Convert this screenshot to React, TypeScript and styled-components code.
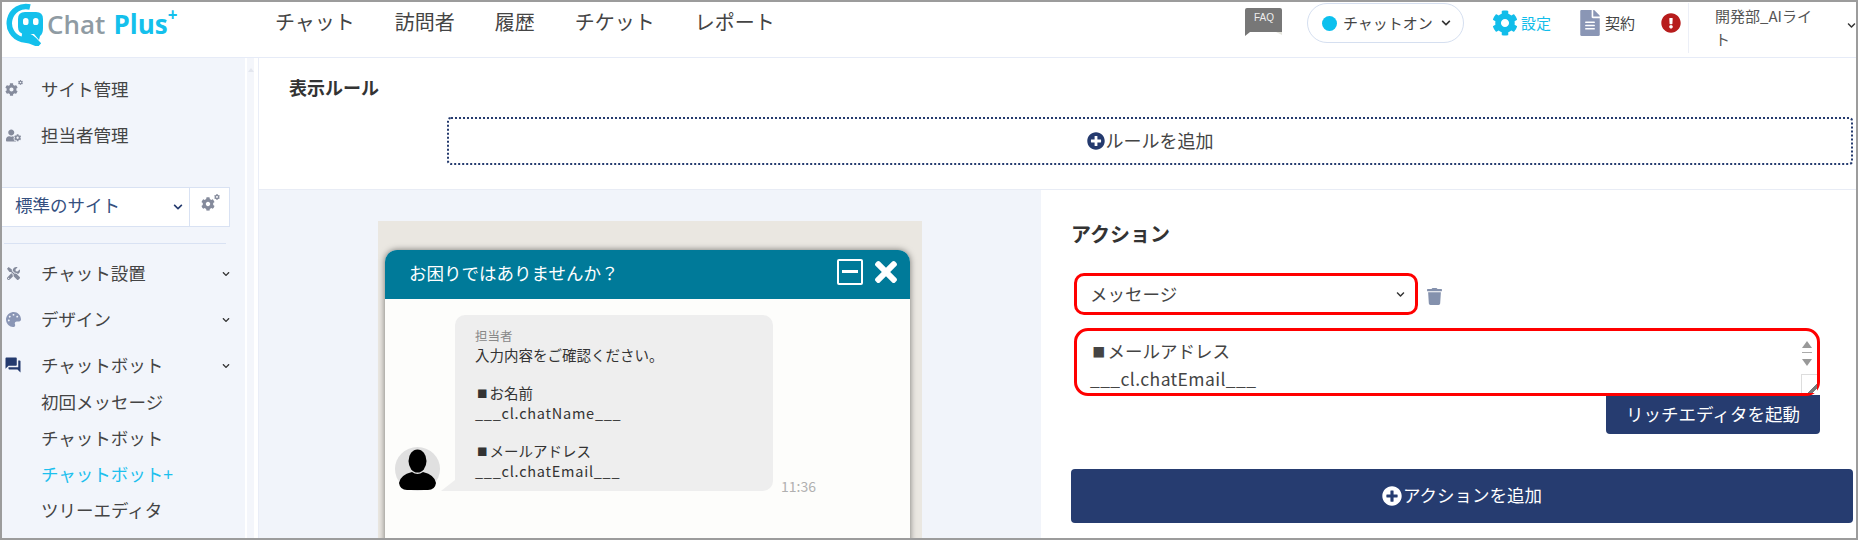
import React from 'react';
import styled, { createGlobalStyle } from 'styled-components';
import {
  FaChevronDown, FaCog, FaExclamationCircle, FaFileAlt, FaPalette,
  FaPlusCircle, FaTimes, FaTools, FaTrash, FaUserCog,
} from 'react-icons/fa';
import { MdQuestionAnswer } from 'react-icons/md';

const GlobalStyle = createGlobalStyle`
  html, body {
    margin: 0;
    padding: 0;
    background: #fff;
    overflow: hidden;
  }
  body {
    font-family: "Noto Sans CJK JP", "Noto Sans", sans-serif;
    color: #444;
  }
`;

function Logo() {
  return (
    <LogoWrap>
      <svg width="40" height="44" viewBox="0 0 40 44">
        <path d="M27 5 A16.5 16.5 0 0 0 19 37.5 Q29 38.5 36 43 Q28 33 19 32" fill="none" stroke="#14c0ec" strokeWidth="5.5" />
        <path d="M22 10 H33 Q40 10 40 17 V26 Q40 32 37 34 L36 38 L31 32 H22 Q15 32 15 25 V17 Q15 10 22 10 Z" fill="#14c0ec" />
        <rect x="20" y="16" width="5.5" height="7" rx="2.6" fill="#fff" />
        <rect x="30" y="16" width="5.5" height="7" rx="2.6" fill="#fff" />
      </svg>
      <LogoGray>Chat</LogoGray>
      <LogoCyan>Plus</LogoCyan>
      <LogoPlus>+</LogoPlus>
    </LogoWrap>
  );
}

function FaqIcon() {
  return (
    <FaqWrap>
      <svg width="38" height="28" viewBox="0 0 38 28">
        <path d="M31 24 H37 V27 Z" fill="#e4e4dc" />
        <path d="M2 0 H35 Q37 0 37 2 V24 H5 L0 28 V2 Q0 0 2 0 Z" fill="#777" />
      </svg>
      <FaqText>FAQ</FaqText>
    </FaqWrap>
  );
}

function Avatar() {
  return (
    <svg width="45" height="44" viewBox="0 0 45 44">
      <ellipse cx="22.5" cy="22" rx="22.5" ry="22" fill="#e0e0e0" />
      <ellipse cx="22.5" cy="14" rx="9" ry="11.5" fill="#000" />
      <path d="M17 25 Q22.5 29 28 25 Q40 28 41 36 Q40 43 33 43 H12 Q5 43 4 36 Q5 28 17 25 Z" fill="#000" />
    </svg>
  );
}

// big gear with a tiny one at its upper right
function GearPair({ size }: { size: number }) {
  return (
    <GearWrap>
      <FaCog size={size} />
      <TinyGear><FaCog size={Math.round(size * 0.42)} /></TinyGear>
    </GearWrap>
  );
}

const subItems = ['初回メッセージ', 'チャットボット', 'チャットボット+', 'ツリーエディタ'];

export default function App() {
  return (
    <>
      <GlobalStyle />
      <Frame>
        <TopBar>
          <LogoCell><Logo /></LogoCell>
          <MainNav>
            {['チャット', '訪問者', '履歴', 'チケット', 'レポート'].map((t) => <span key={t}>{t}</span>)}
          </MainNav>
          <TopRight>
            <FaqIcon />
            <StatusPill>
              <StatusDot />
              <StatusText>チャットオン</StatusText>
              <FaChevronDown size={10} color="#333" />
            </StatusPill>
            <IconLink $color="#12bdea" $gap={3} $left={28}>
              <FaCog size={26} />
              <LinkText>設定</LinkText>
            </IconLink>
            <IconLink $color="#444" $gap={2} $left={26}>
              <FaFileAlt size={26} color="#8a96b5" />
              <LinkText>契約</LinkText>
            </IconLink>
            <AlertMark><FaExclamationCircle size={20} /></AlertMark>
            <UserCell>
              <UserName>開発部_AIライト</UserName>
              <UserChevron><FaChevronDown size={9} color="#333" /></UserChevron>
            </UserCell>
          </TopRight>
        </TopBar>
        <Body>
          <Sidebar>
            <NavItem>
              <NavIcon $color="#858b9c"><GearPair size={13} /></NavIcon>
              <NavLabel>サイト管理</NavLabel>
            </NavItem>
            <NavItem>
              <NavIcon $color="#858b9c"><FaUserCog size={15} /></NavIcon>
              <NavLabel>担当者管理</NavLabel>
            </NavItem>
            <SiteSelect>
              <SiteName>
                <span>標準のサイト</span>
                <FaChevronDown size={10} color="#243a6e" />
              </SiteName>
              <SiteGear><GearPair size={14} /></SiteGear>
            </SiteSelect>
            <SideDivider />
            <NavItem>
              <NavIcon $color="#858b9c"><FaTools size={13} /></NavIcon>
              <NavLabel>チャット設置</NavLabel>
              <NavChevron><FaChevronDown size={8} /></NavChevron>
            </NavItem>
            <NavItem>
              <NavIcon $color="#8a96b5"><FaPalette size={15} /></NavIcon>
              <NavLabel>デザイン</NavLabel>
              <NavChevron><FaChevronDown size={8} /></NavChevron>
            </NavItem>
            <NavItem>
              <NavIcon $color="#243a6e"><MdQuestionAnswer size={18} /></NavIcon>
              <NavLabel>チャットボット</NavLabel>
              <NavChevron><FaChevronDown size={8} /></NavChevron>
            </NavItem>
            <SubList>
              {subItems.map((t) => <SubItem key={t} $active={t === 'チャットボット+'}>{t}</SubItem>)}
            </SubList>
          </Sidebar>
          <ScrollStrip><ScrollArrow /></ScrollStrip>
          <Main>
            <RuleSection>
              <SectionTitle>表示ルール</SectionTitle>
              <AddRule>
                <FaPlusCircle size={18} color="#243a6e" />
                <ButtonLabel>ルールを追加</ButtonLabel>
              </AddRule>
            </RuleSection>
            <Lower>
              <Preview>
                <PreviewStage>
                  <ChatWidget>
                    <ChatHeader>
                      <ChatTitle>お困りではありませんか？</ChatTitle>
                      <MinimizeBox />
                      <CloseMark><FaTimes size={32} /></CloseMark>
                    </ChatHeader>
                    <ChatBody>
                      <Avatar />
                      <Bubble>
                        <BubbleTail />
                        <BubbleName>担当者</BubbleName>
                        <BubbleText>
                          <BubbleLine>入力内容をご確認ください。</BubbleLine>
                          <BubbleLine />
                          <BubbleLine><Square>■</Square>お名前</BubbleLine>
                          <BubbleLine $latin>___cl.chatName___</BubbleLine>
                          <BubbleLine />
                          <BubbleLine><Square>■</Square>メールアドレス</BubbleLine>
                          <BubbleLine $latin>___cl.chatEmail___</BubbleLine>
                        </BubbleText>
                      </Bubble>
                      <ChatTime>11:36</ChatTime>
                    </ChatBody>
                  </ChatWidget>
                </PreviewStage>
              </Preview>
              <ActionPane>
                <ActionTitle>アクション</ActionTitle>
                <SelectRow>
                  <ActionSelect>
                    <span>メッセージ</span>
                    <FaChevronDown size={9} color="#333" />
                  </ActionSelect>
                  <TrashMark><FaTrash size={17} /></TrashMark>
                </SelectRow>
                <MessageBox>
                  <BoxSquare>■</BoxSquare>メールアドレス
                  <BoxLatin>___cl.chatEmail___</BoxLatin>
                  <ArrowUp />
                  <ArrowRule />
                  <ArrowDown />
                  <ResizeGrip />
                </MessageBox>
                <RichRow><RichButton>リッチエディタを起動</RichButton></RichRow>
                <AddAction>
                  <AddActionIcon><FaPlusCircle size={20} /></AddActionIcon>
                  <ButtonLabel>アクションを追加</ButtonLabel>
                </AddAction>
              </ActionPane>
            </Lower>
          </Main>
        </Body>
      </Frame>
    </>
  );
}

const Frame = styled.div`
  box-sizing: border-box;
  width: 1858px;
  height: 540px;
  border: 2px solid #9c9c9c;
  display: flex;
  flex-direction: column;
  overflow: hidden;
  background: #fff;
`;

const TopBar = styled.header`
  box-sizing: border-box;
  height: 56px;
  flex: none;
  display: flex;
  align-items: flex-start;
  border-bottom: 1px solid #e6ebf7;
`;

const LogoCell = styled.div`
  width: 273px;
  flex: none;
`;

const LogoWrap = styled.div`
  display: flex;
  align-items: center;
  height: 44px;
  padding-left: 1px;
  font-family: "Open Sans", sans-serif;
  font-size: 26px;
  font-weight: 700;
  line-height: 1;
`;

const LogoGray = styled.span`
  color: #8f9ba3;
  margin-left: 4px;
  font-weight: 600;
`;

const LogoCyan = styled.span`
  color: #14c0ec;
  margin-left: 8px;
`;

const LogoPlus = styled.span`
  color: #14c0ec;
  font-size: 17px;
  align-self: flex-start;
  margin-top: 4px;
`;

const MainNav = styled.nav`
  display: flex;
  gap: 40px;
  font-size: 20px;
  line-height: 40px;
  color: #444;
`;

const TopRight = styled.div`
  margin-left: auto;
  display: flex;
  align-items: flex-start;
  height: 100%;
`;

const FaqWrap = styled.div`
  position: relative;
  width: 38px;
  height: 28px;
  margin-top: 6px;
`;

const FaqText = styled.span`
  position: absolute;
  left: 0;
  right: 0;
  top: 3px;
  text-align: center;
  font-family: "Liberation Sans", sans-serif;
  font-size: 10px;
  line-height: 14px;
  color: #eee;
`;

const StatusPill = styled.div`
  box-sizing: border-box;
  width: 157px;
  height: 40px;
  margin: 1px 0 0 24px;
  padding: 0 12px 0 14px;
  display: flex;
  align-items: center;
  border: 1px solid #d5dff0;
  border-radius: 20px;
  font-size: 15px;
  color: #444;

  svg {
    margin-left: auto;
  }
`;

const StatusText = styled.span`
  margin-bottom: 2px;
`;

const StatusDot = styled.span`
  width: 15px;
  height: 15px;
  margin-right: 6px;
  border-radius: 50%;
  background: #0cc0ee;
`;

const IconLink = styled.div<{ $color: string; $gap: number; $left: number }>`
  display: flex;
  align-items: center;
  gap: ${(p) => p.$gap}px;
  height: 40px;
  margin: 1px 0 0 ${(p) => p.$left}px;
  font-size: 15px;
  color: ${(p) => p.$color};
`;

const LinkText = styled.span`
  margin-bottom: 2px;
`;

const AlertMark = styled.div`
  display: flex;
  align-items: center;
  height: 40px;
  margin: 1px 0 0 26px;
  color: #b71c1c;
`;

const UserCell = styled.div`
  box-sizing: border-box;
  width: 168px;
  height: 50px;
  margin: 1px 0 0 7px;
  padding-left: 26px;
  display: flex;
  align-items: center;
  justify-content: space-between;
  border-left: 1px solid #eceff7;
`;

const UserName = styled.div`
  width: 104px;
  margin-bottom: 2px;
  font-size: 15px;
  line-height: 23px;
  color: #555;
`;

const UserChevron = styled.span`
  display: flex;
  margin-bottom: 6px;
`;

const Body = styled.div`
  flex: 1;
  min-height: 0;
  display: flex;
`;

const Sidebar = styled.aside`
  box-sizing: border-box;
  width: 243px;
  flex: none;
  padding-top: 8px;
  background: #f2f5fb;
  display: flex;
  flex-direction: column;
`;

const NavItem = styled.div`
  position: relative;
  flex: none;
  height: 46px;
  display: flex;
  align-items: center;
  font-size: 17.5px;
  color: #444;
`;

const NavLabel = styled.span`
  margin-bottom: 1px;
`;

const NavIcon = styled.span<{ $color: string }>`
  display: flex;
  justify-content: center;
  width: 20px;
  margin: 0 18px 0 1px;
  color: ${(p) => p.$color};
`;

const GearWrap = styled.span`
  position: relative;
  display: flex;
  margin-right: 3px;
`;

const TinyGear = styled.span`
  position: absolute;
  right: -5px;
  top: -3px;
  display: flex;
`;

const NavChevron = styled.span`
  position: absolute;
  left: 220px;
  top: 20px;
  display: flex;
  color: #333;
`;

const SiteSelect = styled.div`
  box-sizing: border-box;
  flex: none;
  width: 228px;
  height: 40px;
  margin-top: 29px;
  display: flex;
  background: #fff;
  border: 1px solid #d9e2f3;
  border-left: 0;
`;

const SiteName = styled.div`
  box-sizing: border-box;
  width: 188px;
  padding: 0 6px 0 13px;
  display: flex;
  align-items: center;
  justify-content: space-between;
  font-size: 17.5px;
  color: #35507f;
  border-right: 1px solid #d9e2f3;

  span {
    margin-bottom: 5px;
  }
`;

const SiteGear = styled.div`
  flex: 1;
  display: flex;
  align-items: center;
  justify-content: center;
  padding-bottom: 6px;
  color: #858b9c;
`;

const SideDivider = styled.div`
  flex: none;
  width: 222px;
  height: 1px;
  margin: 16px 0 6px 2px;
  background: #d9e2f3;
`;

const SubList = styled.div`
  margin-top: -4px;
  padding-left: 39px;
`;

const SubItem = styled.div<{ $active: boolean }>`
  height: 36px;
  line-height: 36px;
  font-size: 17.5px;
  color: ${(p) => (p.$active ? '#1cc0ee' : '#444')};
`;

const ScrollStrip = styled.div`
  width: 14px;
  flex: none;
  box-sizing: border-box;
  padding: 10px 0 0 2px;
  background: linear-gradient(90deg, #fff 0 2px, #f4f6fb 2px 9px, #fff 9px 13px, #e9edf7 13px);
`;

const ScrollArrow = styled.div`
  width: 0;
  height: 0;
  margin-left: 1px;
  border-left: 3px solid transparent;
  border-right: 3px solid transparent;
  border-bottom: 4px solid #e3e6ee;
`;

const Main = styled.main`
  flex: 1;
  min-width: 0;
  display: flex;
  flex-direction: column;
`;

const RuleSection = styled.section`
  box-sizing: border-box;
  flex: none;
  height: 132px;
  padding-top: 17px;
  border-bottom: 1px solid #e8ecf5;
`;

const SectionTitle = styled.h2`
  margin: 0 0 0 30px;
  font-size: 18px;
  line-height: 24px;
  font-weight: 700;
  color: #333;
`;

const ActionTitle = styled.h2`
  margin: 0;
  font-size: 20px;
  line-height: 24px;
  font-weight: 700;
  color: #333;
`;

const ButtonLabel = styled.span`
  margin-bottom: 3px;
`;

const AddRule = styled.div`
  box-sizing: border-box;
  height: 48px;
  margin: 18px 3px 0 188px;
  display: flex;
  align-items: center;
  justify-content: center;
  gap: 1px;
  border: 2px dotted #243a6e;
  border-radius: 4px;
  font-size: 18px;
  color: #444;
`;

const Lower = styled.div`
  flex: 1;
  min-height: 0;
  display: flex;
`;

const Preview = styled.div`
  box-sizing: border-box;
  width: 782px;
  flex: none;
  padding: 31px 0 0 119px;
  background: #f1f4fa;
  overflow: hidden;
`;

const PreviewStage = styled.div`
  box-sizing: border-box;
  width: 544px;
  height: 400px;
  padding: 29px 12px 0 7px;
  background: #eae7e1;
`;

const ChatWidget = styled.div`
  height: 400px;
  border-radius: 12px 12px 0 0;
  background: #fdfdfb;
  box-shadow: 0 0 6px rgba(0, 0, 0, 0.5);
`;

const ChatHeader = styled.div`
  box-sizing: border-box;
  height: 49px;
  padding: 0 8px 5px 24px;
  display: flex;
  align-items: center;
  border-radius: 12px 12px 0 0;
  background: #007a99;
  color: #fff;
`;

const ChatTitle = styled.div`
  flex: 1;
  font-size: 17.5px;
`;

const MinimizeBox = styled.div`
  box-sizing: border-box;
  position: relative;
  width: 26px;
  height: 26px;
  border: 2.5px solid #fff;
  border-radius: 2px;

  &::after {
    content: '';
    position: absolute;
    left: 3px;
    right: 3px;
    top: 9px;
    height: 3px;
    background: #fff;
  }
`;

const CloseMark = styled.div`
  display: flex;
  margin-left: 7px;
`;

const ChatBody = styled.div`
  display: flex;
  align-items: flex-end;
  padding: 16px 0 0 10px;
`;

const Bubble = styled.div`
  position: relative;
  box-sizing: border-box;
  width: 318px;
  height: 176px;
  margin-left: 15px;
  padding: 12px 20px 0;
  border-radius: 10px 10px 10px 0;
  background: #eee;
`;

const BubbleTail = styled.div`
  position: absolute;
  left: -14px;
  bottom: 0;
  width: 0;
  height: 0;
  border-bottom: 11px solid #eee;
  border-left: 14px solid transparent;
`;

const BubbleName = styled.div`
  font-size: 12.5px;
  line-height: 18px;
  color: #888;
`;

const BubbleText = styled.div`
  font-size: 14.5px;
  line-height: 19px;
  color: #333;
`;

const BubbleLine = styled.div<{ $latin?: boolean }>`
  min-height: 19px;
  letter-spacing: ${(p) => (p.$latin ? '0.75px' : '0')};
`;

const Square = styled.span`
  display: inline-block;
  width: 14.5px;
  font-size: 10.5px;
  text-align: center;
  vertical-align: 1px;
`;

const ChatTime = styled.span`
  margin: 0 0 -4px 8px;
  font-size: 14px;
  line-height: 18px;
  color: #b0b0b0;
`;

const ActionPane = styled.section`
  flex: 1;
  min-width: 0;
  padding: 32px 3px 0 30px;
  display: flex;
  flex-direction: column;
`;

const SelectRow = styled.div`
  display: flex;
  align-items: center;
  margin: 27px 0 0 3px;
`;

const ActionSelect = styled.div`
  box-sizing: border-box;
  width: 344px;
  height: 42px;
  padding: 0 10px 0 13px;
  display: flex;
  align-items: center;
  justify-content: space-between;
  border: 3.5px solid #f00;
  border-radius: 10px;
  font-size: 17.5px;
  color: #444;

  span {
    margin-bottom: 2px;
  }
`;

const TrashMark = styled.div`
  display: flex;
  margin: 4px 0 0 8px;
  color: #8491ad;
`;

const MessageBox = styled.div`
  position: relative;
  box-sizing: border-box;
  width: 746px;
  height: 68px;
  margin: 13px 0 0 3px;
  padding: 5.5px 13px 0;
  border: 3.5px solid #f00;
  border-radius: 14px;
  font-size: 17.5px;
  line-height: 27px;
  color: #444;
`;

const BoxSquare = styled.span`
  display: inline-block;
  width: 17.5px;
  font-size: 13px;
  text-align: center;
  vertical-align: 1px;
`;

const BoxLatin = styled.div`
  letter-spacing: 0.4px;
`;

const ArrowUp = styled.div`
  position: absolute;
  right: 5px;
  top: 10px;
  border-left: 5px solid transparent;
  border-right: 5px solid transparent;
  border-bottom: 7px solid #999;
`;

const ArrowRule = styled.div`
  position: absolute;
  right: 5px;
  top: 21px;
  width: 10px;
  height: 1px;
  background: #aaa;
`;

const ArrowDown = styled.div`
  position: absolute;
  right: 5px;
  top: 28px;
  border-left: 5px solid transparent;
  border-right: 5px solid transparent;
  border-top: 7px solid #999;
`;

const ResizeGrip = styled.div`
  position: absolute;
  right: 0;
  bottom: 0;
  width: 15px;
  height: 18px;
  border-left: 1px solid #ddd;
  border-top: 1px solid #ddd;
  background: linear-gradient(135deg, #fff 70%, #777 70% 85%, #fff 85%);
`;

const RichRow = styled.div`
  display: flex;
  justify-content: flex-end;
  width: 749px;
  margin-top: -1px;
`;

const RichButton = styled.button`
  width: 214px;
  height: 39px;
  padding: 0 0 3px;
  border: none;
  border-radius: 0 0 4px 4px;
  background: #263c70;
  color: #fff;
  font-family: inherit;
  font-size: 17.5px;
`;

const AddAction = styled.button`
  height: 54px;
  margin-top: 35px;
  padding: 0;
  display: flex;
  align-items: center;
  justify-content: center;
  gap: 1px;
  border: none;
  border-radius: 4px;
  background: #263c70;
  color: #fff;
  font-family: inherit;
  font-size: 17.5px;
`;

const AddActionIcon = styled.span`
  display: flex;
  color: #fff;
`;
